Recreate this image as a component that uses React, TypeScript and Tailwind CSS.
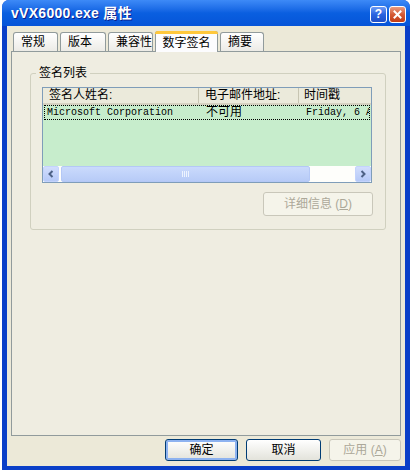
import React from 'react';

const cjk = '"Noto Sans CJK SC", "DejaVu Sans", sans-serif';
const ui = { fontFamily: `"Liberation Sans", ${cjk}` };
const mono = { fontFamily: '"Liberation Mono", monospace' };

function TitleButton({ kind }: { kind: 'help' | 'close' }) {
    const isClose = kind === 'close';
    return (
        <div
            className={`w-[17px] h-[17px] rounded-[3px] border border-white flex items-center justify-center ${isClose ? 'bg-gradient-to-b from-[#E89A7E] via-[#D55A35] to-[#C23B12]' : 'bg-gradient-to-b from-[#6E9BF5] via-[#2A63E0] to-[#1E4FC8]'}`}
        >
            {isClose ? (
                <svg width="9" height="9" viewBox="0 0 9 9">
                    <path d="M1.5 1.5 L7.5 7.5 M7.5 1.5 L1.5 7.5" stroke="white" strokeWidth="2" strokeLinecap="square" />
                </svg>
            ) : (
                <span className="text-white font-bold text-[12px] leading-none" style={{ fontFamily: '"Liberation Sans", sans-serif' }}>?</span>
            )}
        </div>
    );
}

function Tab({ label, active, width }: { label: string; active?: boolean; width: string }) {
    if (active) {
        return (
            <div className={`${width} h-[21px] -mb-px relative z-10 bg-[#FCFCFE] border border-b-0 border-[#919B9C] rounded-t-[3px] flex items-center justify-center text-[12px] text-black`}>
                <div className="absolute -top-px -left-px -right-px h-[3px] bg-[#FFC83C] rounded-t-[3px]" />
                <span className="pt-[1px]">{label}</span>
            </div>
        );
    }
    return (
        <div className={`${width} h-[19px] mt-[2px] bg-gradient-to-b from-white to-[#ECEBE6] border border-b-0 border-[#919B9C] rounded-t-[3px] flex items-center pl-[7px] text-[12px] text-black`}>
            {label}
        </div>
    );
}

function ArrowBtn({ dir }: { dir: 'left' | 'right' }) {
    return (
        <div className="w-[16px] h-[16px] shrink-0 rounded-[2px] bg-gradient-to-b from-[#D2DEFD] to-[#B5C9F7] border border-[#C3D3FD] flex items-center justify-center">
            <svg width="8" height="8" viewBox="0 0 8 8">
                <path d={dir === 'left' ? 'M5.5 1 L2.5 4 L5.5 7' : 'M2.5 1 L5.5 4 L2.5 7'} stroke="#4D6185" strokeWidth="2" fill="none" />
            </svg>
        </div>
    );
}

export default function App() {
    return (
        <div className="w-[412px] h-[476px] bg-white overflow-hidden" style={ui}>
            <div className="ml-[2px] w-[408px] h-[470px] flex flex-col bg-[#0A3FC8] rounded-t-[7px]">
                {/* Title bar */}
                <div className="h-[26px] rounded-t-[7px] bg-gradient-to-b from-[#3D8AF7] via-[#0A5FE0] to-[#0654D8] flex items-center pl-[9px] pr-[4px]">
                    <span className="text-white font-bold text-[14px] tracking-[0.3px] flex-1" style={{ textShadow: '1px 1px #0A1E8C' }}>
                        vVX6000.exe 属性
                    </span>
                    <div className="flex gap-[2px] mt-[2px]">
                        <TitleButton kind="help" />
                        <TitleButton kind="close" />
                    </div>
                </div>

                {/* Body */}
                <div className="flex-1 mx-[5px] mb-[4px] bg-[#ECE9D8] flex flex-col pt-[4px] pl-[4px] pr-[4px]">
                    {/* Tabs */}
                    <div className="flex items-end pl-[2px] gap-[2px]">
                        <Tab label="常规" width="w-[45px]" />
                        <Tab label="版本" width="w-[46px]" />
                        <Tab label="兼容性" width="w-[45px]" />
                        <Tab label="数字签名" width="w-[63px]" active />
                        <Tab label="摘要" width="w-[44px]" />
                    </div>

                    {/* Tab page */}
                    <div className="h-[385px] border border-[#919B9C] bg-[#EFEDE1] pt-[15px] pl-[18px] pr-[14px]">
                        <div className="relative border border-[#D0D0BF] rounded-[3px] h-[157px] mt-[6px] pt-[13px] pl-[11px] pr-[13px]">
                            <span className="absolute -top-[9px] left-[5px] px-[3px] bg-[#EFEDE1] text-[12px] leading-[16px] text-black">签名列表</span>

                            {/* List view */}
                            <div className="h-[96px] border border-[#7F9DB9] bg-[#C7EDCC] flex flex-col overflow-hidden">
                                <div className="h-[17px] flex bg-[#EBEADB] border-b-[2px] border-[#D6D2C2] text-[12px] text-black leading-[15px]">
                                    <div className="w-[156px] shrink-0 pl-[6px] border-r border-[#C7C5B2]">签名人姓名:</div>
                                    <div className="w-[100px] shrink-0 pl-[6px] border-r border-[#C7C5B2]">电子邮件地址:</div>
                                    <div className="flex-1 min-w-0 pl-[5px] overflow-hidden whitespace-nowrap">时间戳</div>
                                </div>
                                <div className="h-[15px] mx-px border border-dotted border-black flex text-[10px] leading-[13px] text-black whitespace-nowrap overflow-hidden">
                                    <div className="w-[155px] shrink-0 pl-[2px] overflow-hidden" style={mono}>Microsoft Corporation</div>
                                    <div className="w-[100px] shrink-0 pl-[6px] text-[12px] overflow-hidden">不可用</div>
                                    <div className="flex-1 min-w-0 pl-[6px] overflow-hidden" style={mono}>Friday, 6 A</div>
                                </div>
                                <div className="flex-1" />
                                <div className="h-[16px] flex bg-[#FEFEFB]">
                                    <ArrowBtn dir="left" />
                                    <div className="w-[249px] shrink-0 ml-[2px] rounded-[2px] bg-gradient-to-b from-[#CADAFC] to-[#B7CBF7] border border-[#B4C8F6] flex items-center justify-center">
                                        <svg width="8" height="6" viewBox="0 0 8 6">
                                            <path d="M0.5 0 V6 M2.5 0 V6 M4.5 0 V6 M6.5 0 V6" stroke="#EEF4FE" strokeWidth="1" />
                                        </svg>
                                    </div>
                                    <div className="flex-1" />
                                    <ArrowBtn dir="right" />
                                </div>
                            </div>

                            <div className="flex justify-end mt-[9px] -mr-[1px]">
                                <div className="w-[110px] h-[24px] rounded-[3px] border border-[#C9C7BA] bg-[#F5F4EA] flex items-center justify-center text-[12px] text-[#ACA899]">
                                    详细信息 (<span className="underline">D</span>)
                                </div>
                            </div>
                        </div>
                    </div>

                    {/* Buttons */}
                    <div className="flex justify-end gap-[8px] mt-[3px]">
                        <div className="w-[73px] h-[22px] rounded-[3px] border border-[#003C74] bg-gradient-to-b from-white to-[#E3E3DB] flex items-center justify-center text-[12px] text-black shadow-[inset_0_0_0_2px_#8DB2F0]">确定</div>
                        <div className="w-[75px] h-[22px] rounded-[3px] border border-[#003C74] bg-gradient-to-b from-white to-[#E3E3DB] flex items-center justify-center text-[12px] text-black">取消</div>
                        <div className="w-[72px] h-[22px] rounded-[3px] border border-[#C9C7BA] bg-[#F5F4EA] flex items-center justify-center text-[12px] text-[#ACA899]">应用 (<span className="underline">A</span>)</div>
                    </div>
                </div>
            </div>
        </div>
    );
}
